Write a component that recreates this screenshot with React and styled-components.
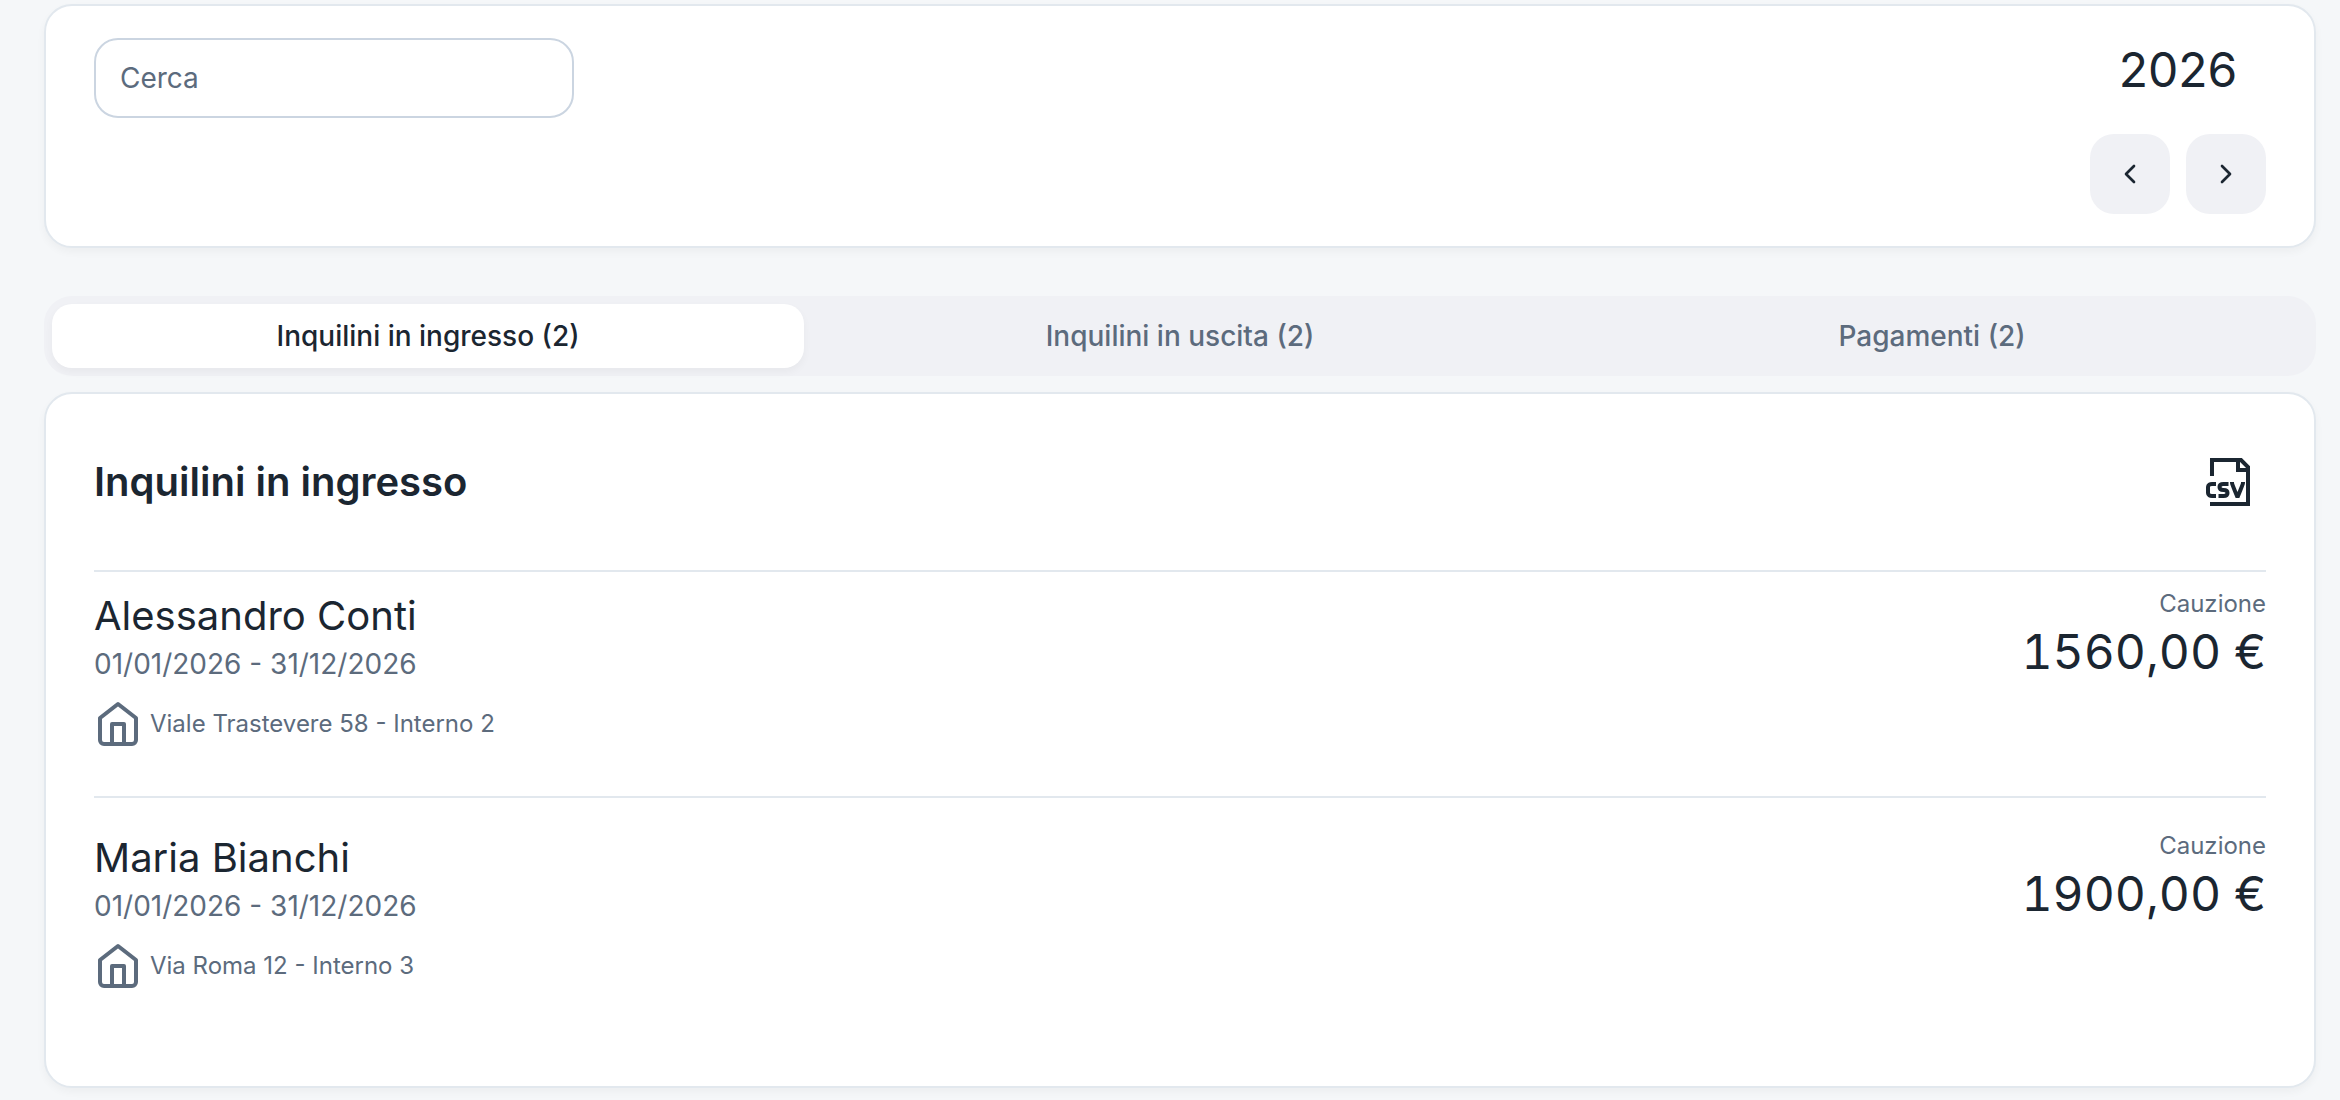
import React from "react";
import styled, { createGlobalStyle } from "styled-components";
import { ChevronLeft, ChevronRight } from "lucide-react";
import { FiHome } from "react-icons/fi";
import { GrDocumentCsv } from "react-icons/gr";

const tabs = [
  { id: "in", label: "Inquilini in ingresso", count: 2 },
  { id: "out", label: "Inquilini in uscita", count: 2 },
  { id: "pay", label: "Pagamenti", count: 2 },
];

const tenants = [
  {
    name: "Alessandro Conti",
    period: "01/01/2026 - 31/12/2026",
    address: "Viale Trastevere 58 - Interno 2",
    deposit: "1560,00 €",
  },
  {
    name: "Maria Bianchi",
    period: "01/01/2026 - 31/12/2026",
    address: "Via Roma 12 - Interno 3",
    deposit: "1900,00 €",
  },
];

const App = () => {
  const [search, setSearch] = React.useState("");
  const [year, setYear] = React.useState(2026);
  const [active, setActive] = React.useState("in");

  const current = tabs.find((tab) => tab.id === active);
  const rows = tenants.filter((item) =>
    item.name.toLowerCase().includes(search.toLowerCase())
  );

  return (
    <Page>
      <GlobalStyle />

      <Toolbar>
        <SearchInput
          type="text"
          placeholder="Cerca"
          aria-label="Cerca"
          value={search}
          onChange={(e) => setSearch(e.target.value)}
        />
        <YearPicker>
          <Year>{year}</Year>
          <YearButtons>
            <YearButton
              type="button"
              aria-label="Anno precedente"
              onClick={() => setYear(year - 1)}
            >
              <ChevronLeft size={32} />
            </YearButton>
            <YearButton
              type="button"
              aria-label="Anno successivo"
              onClick={() => setYear(year + 1)}
            >
              <ChevronRight size={32} />
            </YearButton>
          </YearButtons>
        </YearPicker>
      </Toolbar>

      <TabList role="tablist">
        {tabs.map((tab) => (
          <Tab
            key={tab.id}
            type="button"
            role="tab"
            aria-selected={tab.id === active}
            $active={tab.id === active}
            onClick={() => setActive(tab.id)}
          >
            {`${tab.label} (${tab.count})`}
          </Tab>
        ))}
      </TabList>

      <Panel role="tabpanel">
        <PanelHeader>
          <Heading>{current.label}</Heading>
          <ExportButton type="button" aria-label="Esporta CSV">
            <GrDocumentCsv size={48} />
          </ExportButton>
        </PanelHeader>

        <TenantList>
          {rows.map((item) => (
            <Tenant key={item.name}>
              <div>
                <Name>{item.name}</Name>
                <Period>{item.period}</Period>
                <Address>
                  <FiHome size={48} />
                  <span>{item.address}</span>
                </Address>
              </div>
              <Deposit>
                <DepositLabel>Cauzione</DepositLabel>
                <Amount>{item.deposit}</Amount>
              </Deposit>
            </Tenant>
          ))}
        </TenantList>
      </Panel>
    </Page>
  );
};

export default App;

const GlobalStyle = createGlobalStyle`
  * {
    box-sizing: border-box;
  }

  body {
    margin: 0;
    background: #f5f7f9;
    color: #1b2631;
    font-family: Inter, "Liberation Sans", sans-serif;
  }

  button, input {
    font-family: inherit;
  }

  h2, p, ul {
    margin: 0;
    padding: 0;
  }
`;

const Page = styled.main`
  padding: 4px 24px 12px 44px;
`;

const Card = styled.section`
  background: #ffffff;
  border: 2px solid #e2e8ee;
  border-radius: 28px;
  box-shadow: 0 4px 8px rgba(0, 0, 0, 0.04);
`;

const Toolbar = styled(Card)`
  display: flex;
  justify-content: space-between;
  align-items: flex-start;
  padding: 32px 48px;
`;

const SearchInput = styled.input`
  width: 480px;
  height: 80px;
  padding: 0 24px;
  border: 2px solid #cbd5e1;
  border-radius: 24px;
  background: #ffffff;
  color: #1b2631;
  font-size: 28px;

  &::placeholder {
    color: #5c6b7d;
    opacity: 1;
  }
`;

const YearPicker = styled.div`
  display: flex;
  flex-direction: column;
  align-items: center;
  gap: 32px;
`;

const Year = styled.p`
  font-size: 48px;
  line-height: 64px;
`;

const YearButtons = styled.div`
  display: flex;
  gap: 16px;
`;

const YearButton = styled.button`
  display: flex;
  align-items: center;
  justify-content: center;
  width: 80px;
  height: 80px;
  padding: 0;
  border: none;
  border-radius: 24px;
  background: #f0f1f5;
  color: #1b2631;
  cursor: pointer;
`;

const TabList = styled.div`
  display: grid;
  grid-template-columns: repeat(3, 1fr);
  margin: 48px 0 16px;
  padding: 8px;
  border-radius: 28px;
  background: #f0f1f5;
`;

const Tab = styled.button`
  padding: 12px 24px;
  border: none;
  border-radius: 20px;
  background: ${(props) => (props.$active ? "#ffffff" : "transparent")};
  box-shadow: ${(props) =>
    props.$active ? "0 4px 8px rgba(0, 0, 0, 0.04)" : "none"};
  color: ${(props) => (props.$active ? "#1b2631" : "#5c6b7d")};
  font-size: 28px;
  font-weight: 500;
  line-height: 40px;
  cursor: pointer;
`;

const Panel = styled(Card)`
  padding: 48px;
`;

const PanelHeader = styled.header`
  display: flex;
  justify-content: space-between;
  align-items: center;
  padding-bottom: 48px;
  border-bottom: 2px solid #e2e8ee;
`;

const Heading = styled.h2`
  font-size: 40px;
  font-weight: 600;
  line-height: 56px;
`;

const ExportButton = styled.button`
  display: flex;
  align-items: center;
  justify-content: center;
  width: 80px;
  height: 80px;
  padding: 0;
  border: none;
  border-radius: 24px;
  background: transparent;
  color: #1b2631;
  cursor: pointer;

  path {
    stroke: currentColor;
  }
`;

const TenantList = styled.ul`
  list-style: none;
`;

const Tenant = styled.li`
  display: flex;
  justify-content: space-between;
  align-items: flex-start;
  padding: 32px 0 48px;

  &:first-child {
    padding-top: 16px;
  }

  & + & {
    border-top: 2px solid #e2e8ee;
  }
`;

const Name = styled.p`
  font-size: 40px;
  line-height: 56px;
`;

const Period = styled.p`
  color: #5c6b7d;
  font-size: 28px;
  line-height: 40px;
`;

const Address = styled.p`
  display: flex;
  align-items: center;
  gap: 8px;
  margin-top: 16px;
  color: #5c6b7d;
  font-size: 24px;
  line-height: 32px;
`;

const Deposit = styled.div`
  text-align: right;
`;

const DepositLabel = styled.p`
  color: #5c6b7d;
  font-size: 24px;
  line-height: 32px;
`;

const Amount = styled.p`
  font-size: 48px;
  font-variant-numeric: tabular-nums;
  line-height: 64px;
`;
